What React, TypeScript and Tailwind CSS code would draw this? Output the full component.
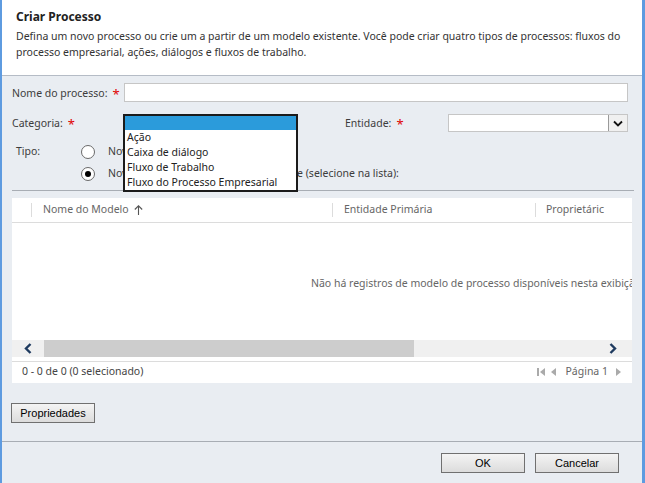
import React from "react";

const ui = { fontFamily: '"Noto Sans", "Open Sans", sans-serif' };
const btn = { fontFamily: '"Liberation Sans", Arial, sans-serif' };

function Star() {
  return <span className="ml-[5px] text-[13px] leading-none text-[#e00000]">*</span>;
}

function Radio({ checked }: { checked?: boolean }) {
  return (
    <span className="flex h-[14px] w-[14px] shrink-0 items-center justify-center rounded-full border border-[#6a6a6a] bg-white">
      {checked && <span className="h-[6px] w-[6px] rounded-full bg-black" />}
    </span>
  );
}

function Button({ children }: { children: React.ReactNode }) {
  return (
    <button
      style={btn}
      className="h-[20px] w-[84px] border border-[#707070] bg-gradient-to-b from-[#f4f4f4] to-[#dcdcdc] text-[11px] text-black"
    >
      {children}
    </button>
  );
}

export default function App() {
  return (
    <div
      style={ui}
      className="flex h-[483px] w-[645px] flex-col overflow-hidden border-l-2 border-r-[3px] border-[#5e9be0] bg-[#e9edf2] text-[10.5px] text-[#3c3c3c]"
    >
      {/* header */}
      <div className="h-[76px] shrink-0 border-b border-[#b5bcc6] bg-white pl-[14px] pt-[7px]">
        <h1 className="text-[12px] font-bold leading-[20px] text-[#222]">Criar Processo</h1>
        <p className="mt-[1px] whitespace-nowrap leading-[16px] text-[#333]">
          Defina um novo processo ou crie um a partir de um modelo existente. Você pode criar quatro tipos de processos: fluxos do
          <br />
          processo empresarial, ações, diálogos e fluxos de trabalho.
        </p>
      </div>

      {/* form */}
      <div className="relative pl-[10px] pr-[14px] pt-[7px]">
        <div className="flex h-[19px] items-center">
          <span className="mt-[3px] flex w-[112px] shrink-0 items-center">
            Nome do processo:
            <Star />
          </span>
          <div className="h-[19px] flex-1 border border-[#c6c6c6] bg-white" />
        </div>

        <div className="mt-[12px] flex h-[18px] items-center">
          <span className="mt-[2px] flex w-[112px] shrink-0 items-center">
            Categoria:
            <Star />
          </span>
          <div className="w-[221px] shrink-0" />
          <span className="mt-[2px] flex w-[103px] shrink-0 items-center">
            Entidade:
            <Star />
          </span>
          <div className="flex h-[18px] flex-1 border border-[#c6c6c6] bg-white">
            <div className="flex-1" />
            <div className="flex w-[19px] items-center justify-center border-l border-[#9a9a9a] bg-[#f0f0f0]">
              <svg width="10" height="7" viewBox="0 0 10 7">
                <path d="M1 1.5 L5 5.5 L9 1.5" fill="none" stroke="#111" strokeWidth="1.8" />
              </svg>
            </div>
          </div>
        </div>

        <div className="mt-[12px] flex h-[16px] items-center">
          <span className="w-[69px] shrink-0 pl-[4px]">Tipo:</span>
          <Radio />
          <span className="ml-[13px]">Novo processo em branco</span>
        </div>
        <div className="mt-[6px] flex h-[16px] items-center">
          <span className="w-[69px] shrink-0" />
          <Radio checked />
          <span className="ml-[13px]">Novo processo de um modelo existente (selecione na lista):</span>
        </div>

        <div className="mt-[8px] -mr-[6px] border-t border-[#a8adb4]" />

        {/* open dropdown list */}
        <div className="absolute left-[121px] top-[38px] w-[175px] border-2 border-[#1b1b1b] bg-white leading-[15px] text-[#222]">
          <div className="h-[14px] bg-[#2b9bdb]" />
          <div className="h-[15px] pl-[2px]">Ação</div>
          <div className="h-[15px] pl-[2px]">Caixa de diálogo</div>
          <div className="h-[15px] pl-[2px]">Fluxo de Trabalho</div>
          <div className="h-[15px] pl-[2px]">Fluxo do Processo Empresarial</div>
        </div>
      </div>

      {/* grid */}
      <div className="ml-[10px] mt-[7px] flex h-[185px] w-[620px] shrink-0 flex-col overflow-hidden bg-white text-[#666]">
        <div className="flex h-[25px] shrink-0 items-center whitespace-nowrap border-b border-[#dcdcdc]">
          <div className="ml-[19px] h-[14px] border-l border-[#dcdcdc]" />
          <div className="flex w-[300px] shrink-0 items-center pl-[11px]">
            Nome do Modelo
            <svg className="ml-[5px]" width="9" height="10" viewBox="0 0 9 10">
              <path d="M4.5 10 V1 M0.8 4.5 L4.5 0.8 L8.2 4.5" fill="none" stroke="#555" strokeWidth="1.1" />
            </svg>
          </div>
          <div className="h-[14px] border-l border-[#dcdcdc]" />
          <div className="w-[202px] shrink-0 pl-[11px]">Entidade Primária</div>
          <div className="h-[14px] border-l border-[#dcdcdc]" />
          <div className="pl-[10px]">Proprietáric</div>
        </div>
        <div className="h-[117px] shrink-0 overflow-hidden whitespace-nowrap pl-[299px] pt-[53px]">
          Não há registros de modelo de processo disponíveis nesta exibição.
        </div>
        <div className="flex h-[17px] shrink-0 items-center bg-[#f0f0f0]">
          <div className="flex w-[32px] shrink-0 justify-center">
            <svg width="8" height="11" viewBox="0 0 8 11">
              <path d="M6.5 1 L2 5.5 L6.5 10" fill="none" stroke="#1e3a5f" strokeWidth="2.4" />
            </svg>
          </div>
          <div className="h-[17px] w-[370px] shrink-0 bg-[#cdcdcd]" />
          <div className="flex-1" />
          <div className="flex w-[38px] shrink-0 justify-center">
            <svg width="8" height="11" viewBox="0 0 8 11">
              <path d="M1.5 1 L6 5.5 L1.5 10" fill="none" stroke="#1e3a5f" strokeWidth="2.4" />
            </svg>
          </div>
        </div>
        <div className="mt-[4px] flex h-[21px] shrink-0 items-center border-t border-[#dcdcdc] pl-[10px] pr-[11px] text-[#444]">
          <span>0 - 0 de 0 (0 selecionado)</span>
          <div className="flex-1" />
          <svg width="8" height="10" viewBox="0 0 8 10" className="mr-[6px]">
            <rect x="0" y="1" width="2" height="8" fill="#aaa" />
            <path d="M8 1 L3 5 L8 9 Z" fill="#aaa" />
          </svg>
          <svg width="5" height="10" viewBox="0 0 5 10" className="mr-[9px]">
            <path d="M5 1 L0 5 L5 9 Z" fill="#aaa" />
          </svg>
          <span className="text-[#666]">Página 1</span>
          <svg width="5" height="10" viewBox="0 0 5 10" className="ml-[8px]">
            <path d="M0 1 L5 5 L0 9 Z" fill="#aaa" />
          </svg>
        </div>
      </div>

      <div className="pl-[9px] pt-[20px]">
        <Button>Propriedades</Button>
      </div>

      <div className="mt-[18px] flex flex-1 items-start justify-end gap-[10px] border-t border-[#a8adb4] pr-[23px] pt-[11px]">
        <Button>OK</Button>
        <Button>Cancelar</Button>
      </div>
    </div>
  );
}
